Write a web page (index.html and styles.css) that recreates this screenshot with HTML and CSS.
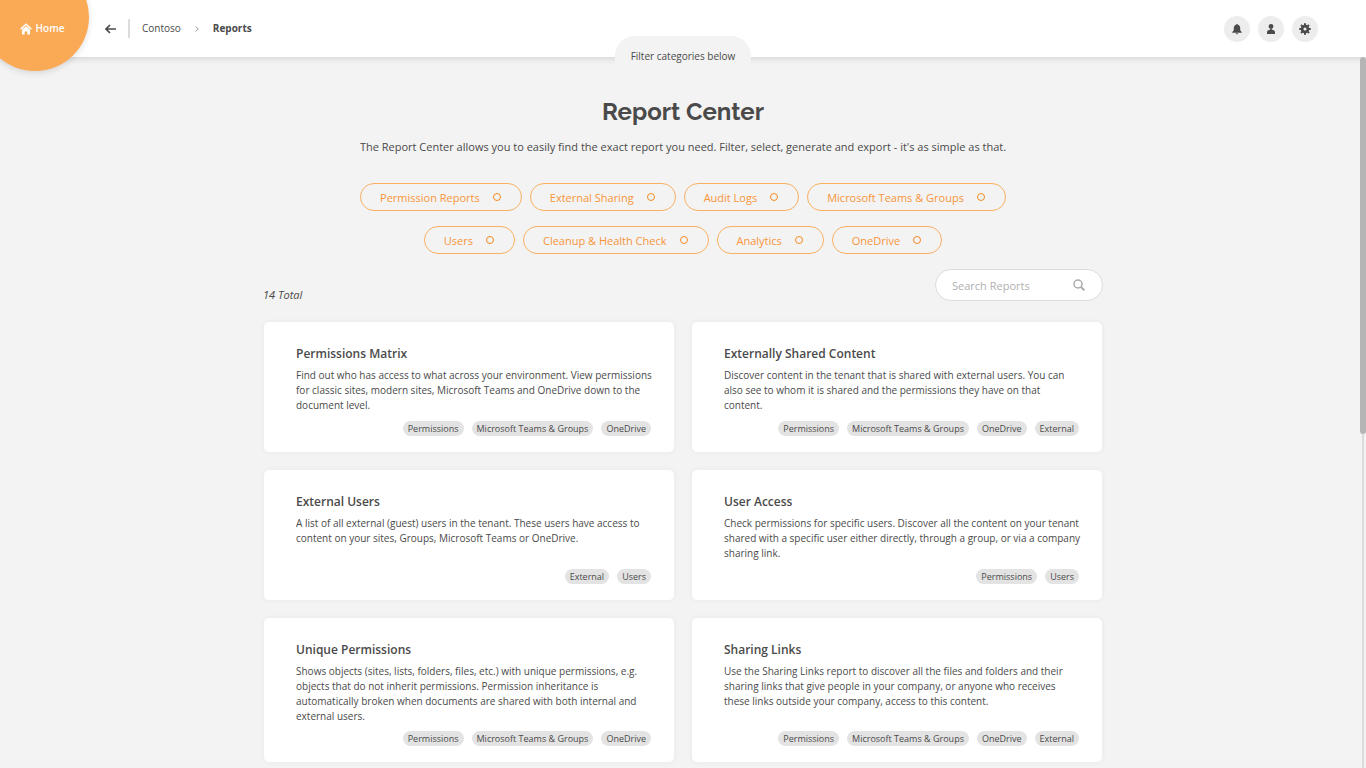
FILE: index.html
```html
<!DOCTYPE html>
<html lang="en">
<head>
<meta charset="utf-8">
<meta name="viewport" content="width=device-width, initial-scale=1">
<title>Report Center</title>
<link rel="stylesheet" href="styles.css">
</head>
<body>
<div class="app">
  <header class="topbar">
    <a class="home" href="#">
      <svg class="home-icon" viewBox="0 0 12 12" aria-hidden="true"><path d="M.7 6.1 6 1.2l5.3 4.9" fill="none" stroke="currentColor" stroke-width="1.500"/><path d="M2 6.8 6 3.2l4 3.6V11.500H7.300V8.400H4.700v3.100H2z" fill="currentColor"/></svg>
      <span>Home</span>
    </a>
    <button class="back" type="button" aria-label="Back">
      <svg viewBox="0 0 12 10" aria-hidden="true"><path d="M11.500 5H1.500M5.500 1 1.500 5l4 4" fill="none" stroke="currentColor" stroke-width="1.700"/></svg>
    </button>
    <nav class="crumbs" aria-label="Breadcrumb">
      <a href="#">Contoso</a>
      <svg class="chevron" viewBox="0 0 4 6" aria-hidden="true"><path d="m.7.5 2.500 2.500L.7 5.500" fill="none" stroke="currentColor"/></svg>
      <a class="current" href="#" aria-current="page">Reports</a>
    </nav>
    <div class="actions">
      <button type="button" aria-label="Notifications"><svg viewBox="0 0 12 12" aria-hidden="true"><path d="M6 1c.6 0 .9.3.9.8C8.500 2.200 9.200 3.500 9.200 5v2.300l1.500 1.700v.7H1.300V9l1.500-1.700V5c0-1.500.7-2.800 2.300-3.200C5.100 1.300 5.400 1 6 1zM4.800 10.200h2.400c-.1.700-.6 1-1.200 1s-1.100-.3-1.200-1z" fill="currentColor"/></svg></button>
      <button type="button" aria-label="Account"><svg viewBox="0 0 12 12" aria-hidden="true"><circle cx="6" cy="3.400" r="2.400" fill="currentColor"/><path d="M5.100 5.500h1.800v1.300c1.800.2 3.100 1 3.100 2.700v1.400H2V9.500c0-1.700 1.300-2.500 3.100-2.700z" fill="currentColor"/></svg></button>
      <button type="button" aria-label="Settings"><svg viewBox="0 0 12 12" aria-hidden="true"><circle cx="6" cy="6" r="2.900" fill="none" stroke="currentColor" stroke-width="2.700"/><path d="M6 .3v2M6 9.700v2M.3 6h2M9.700 6h2M2 2l1.300 1.300M8.700 8.700 10 10M2 10l1.300-1.300M8.700 3.300 10 2" stroke="currentColor" stroke-width="2"/></svg></button>
    </div>
    <button class="filter-tab" type="button">Filter categories below</button>
  </header>

  <main class="content">
    <h1>Report Center</h1>
    <p class="intro">The Report Center allows you to easily find the exact report you need. Filter, select, generate and export - it's as simple as that.</p>
    <div class="filters">
      <button type="button">Permission Reports</button>
      <button type="button">External Sharing</button>
      <button type="button">Audit Logs</button>
      <button type="button">Microsoft Teams &amp; Groups</button>
      <button type="button">Users</button>
      <button type="button">Cleanup &amp; Health Check</button>
      <button type="button">Analytics</button>
      <button type="button">OneDrive</button>
    </div>
    <div class="toolbar">
      <p class="total">14 Total</p>
      <label class="search">
        <input type="text" placeholder="Search Reports" aria-label="Search Reports">
        <svg viewBox="0 0 12 12" aria-hidden="true"><circle cx="5" cy="5" r="4" fill="none" stroke="currentColor" stroke-width="1.500"/><path d="m8 8 3.300 3.300" stroke="currentColor" stroke-width="2"/></svg>
      </label>
    </div>
    <div class="cards">
      <article class="card">
        <h2>Permissions Matrix</h2>
        <p>Find out who has access to what across your environment. View permissions for classic sites, modern sites, Microsoft Teams and OneDrive down to the<br>document level.</p>
        <ul class="tags"><li>Permissions</li><li>Microsoft Teams &amp; Groups</li><li>OneDrive</li></ul>
      </article>
      <article class="card">
        <h2>Externally Shared Content</h2>
        <p>Discover content in the tenant that is shared with external users. You can also see to whom it is shared and the permissions they have on that<br>content.</p>
        <ul class="tags"><li>Permissions</li><li>Microsoft Teams &amp; Groups</li><li>OneDrive</li><li>External</li></ul>
      </article>
      <article class="card">
        <h2>External Users</h2>
        <p>A list of all external (guest) users in the tenant. These users have access to content on your sites, Groups, Microsoft Teams or OneDrive.</p>
        <ul class="tags"><li>External</li><li>Users</li></ul>
      </article>
      <article class="card">
        <h2>User Access</h2>
        <p>Check permissions for specific users. Discover all the content on your tenant shared with a specific user either directly, through a group, or via a company sharing link.</p>
        <ul class="tags"><li>Permissions</li><li>Users</li></ul>
      </article>
      <article class="card">
        <h2>Unique Permissions</h2>
        <p>Shows objects (sites, lists, folders, files, etc.) with unique permissions, e.g. objects that do not inherit permissions. Permission inheritance is<br>automatically broken when documents are shared with both internal and external users.</p>
        <ul class="tags"><li>Permissions</li><li>Microsoft Teams &amp; Groups</li><li>OneDrive</li></ul>
      </article>
      <article class="card">
        <h2>Sharing Links</h2>
        <p>Use the Sharing Links report to discover all the files and folders and their sharing links that give people in your company, or anyone who receives<br>these links outside your company, access to this content.</p>
        <ul class="tags"><li>Permissions</li><li>Microsoft Teams &amp; Groups</li><li>OneDrive</li><li>External</li></ul>
      </article>
    </div>
  </main>
  <div class="scrollbar" aria-hidden="true"><div class="thumb"></div></div>
</div>
</body>
</html>
```
FILE: styles.css
```css
*, *::before, *::after { box-sizing: border-box; }
body {
  margin: 0;
  background: #f3f3f3;
  color: #4a4a4a;
  font: 10px/15px "Segoe UI", "Open Sans", "Noto Sans", sans-serif;
}
h1, h2, p, ul { margin: 0; padding: 0; }
button, input { font: inherit; color: inherit; border: 0; padding: 0; background: none; }
a { color: inherit; text-decoration: none; }
svg { display: block; flex: none; }

.app { position: relative; height: 100vh; overflow: hidden; }

.topbar {
  position: relative;
  display: flex;
  align-items: center;
  height: 57px;
  padding-right: 48px;
  background: #fff;
  box-shadow: 0 2px 6px rgba(0, 0, 0, .12);
}
.home {
  position: absolute;
  left: -19px;
  top: -37px;
  width: 108px;
  height: 108px;
  padding: 23px 0 0 14px;
  border-radius: 50%;
  display: flex;
  align-items: center;
  justify-content: center;
  gap: 4px;
  background: #faa954;
  color: #fff;
  font-weight: 600;
  box-shadow: 0 2px 6px rgba(0, 0, 0, .12);
}
.home-icon { width: 12px; height: 12px; }
.back {
  margin-left: 104px;
  padding-right: 11px;
  height: 19px;
  border-right: 2px solid #dcdcdc;
}
.back svg { width: 13px; height: 10px; }
.crumbs { display: flex; align-items: center; gap: 14px; padding-left: 12px; }
.chevron { width: 4px; height: 6px; color: #999; }
.current { font-weight: 700; }
.actions { display: flex; gap: 8px; margin-left: auto; }
.actions button {
  display: grid;
  place-items: center;
  width: 26px;
  height: 26px;
  border-radius: 50%;
  background: #ededed;
}
.actions svg { width: 12px; height: 12px; }
.filter-tab {
  position: absolute;
  left: 50%;
  top: 36px;
  transform: translateX(-50%);
  width: 136px;
  height: 40px;
  border-radius: 20px 20px 0 0;
  background: #f3f3f3;
}

.content { max-width: 840px; margin: 0 auto; }
h1 {
  padding-top: 39px;
  font: 700 24px/32px Raleway, Lato, sans-serif;
  text-align: center;
}
.intro { margin-top: 11px; font-size: 11px; line-height: 16px; text-align: center; }
.filters {
  display: flex;
  flex-wrap: wrap;
  justify-content: center;
  gap: 15px 8px;
  padding: 28px 80px 0;
}
.filters button {
  display: flex;
  align-items: center;
  gap: 13px;
  height: 28px;
  padding: 0 20px 0 19px;
  border: 1px solid #f9b062;
  border-radius: 14px;
  color: #f7953a;
  font-size: 11px;
}
.filters button::after {
  content: "";
  width: 8px;
  height: 8px;
  border: 1px solid #f58a1f;
  border-radius: 50%;
}
.toolbar { display: flex; justify-content: space-between; align-items: flex-end; margin-top: 15px; }
.total { font-size: 11px; line-height: 12px; font-style: italic; }
.search {
  display: flex;
  align-items: center;
  width: 168px;
  height: 32px;
  padding: 0 17px 0 16px;
  border: 1px solid #dcdcdc;
  border-radius: 16px;
  background: #fff;
  color: #aaa;
}
.search input { flex: 1; min-width: 0; outline: 0; font-size: 11px; }
.search input::placeholder { color: #b0b0b0; opacity: 1; }
.search svg { width: 12px; height: 12px; }

.cards { display: grid; grid-template-columns: 1fr 1fr; gap: 16px; margin-top: 20px; }
.card {
  display: flex;
  flex-direction: column;
  min-height: 132px;
  padding: 22px 23px 16px 32px;
  border: 1px solid #efefef;
  border-radius: 6px;
  background: #fff;
  box-shadow: 0 0 4px rgba(0, 0, 0, .04);
}
.card h2 { font-size: 12px; line-height: 20px; font-weight: 600; }
.card p { margin: 4px -6px 7px 0; }
.tags { display: flex; justify-content: flex-end; gap: 8px; margin-top: auto; list-style: none; }
.tags li { padding: 0 5px; border-radius: 8px; background: #e3e3e3; font-size: 9px; }

.scrollbar {
  position: absolute;
  right: 0;
  top: 57px;
  bottom: 0;
  width: 6px;
  background: linear-gradient(#dcdcdc, #dcdcdc) center / 2px 100% no-repeat;
}
.thumb { height: 53%; border-radius: 3px; background: #b5b5b5; }
```
